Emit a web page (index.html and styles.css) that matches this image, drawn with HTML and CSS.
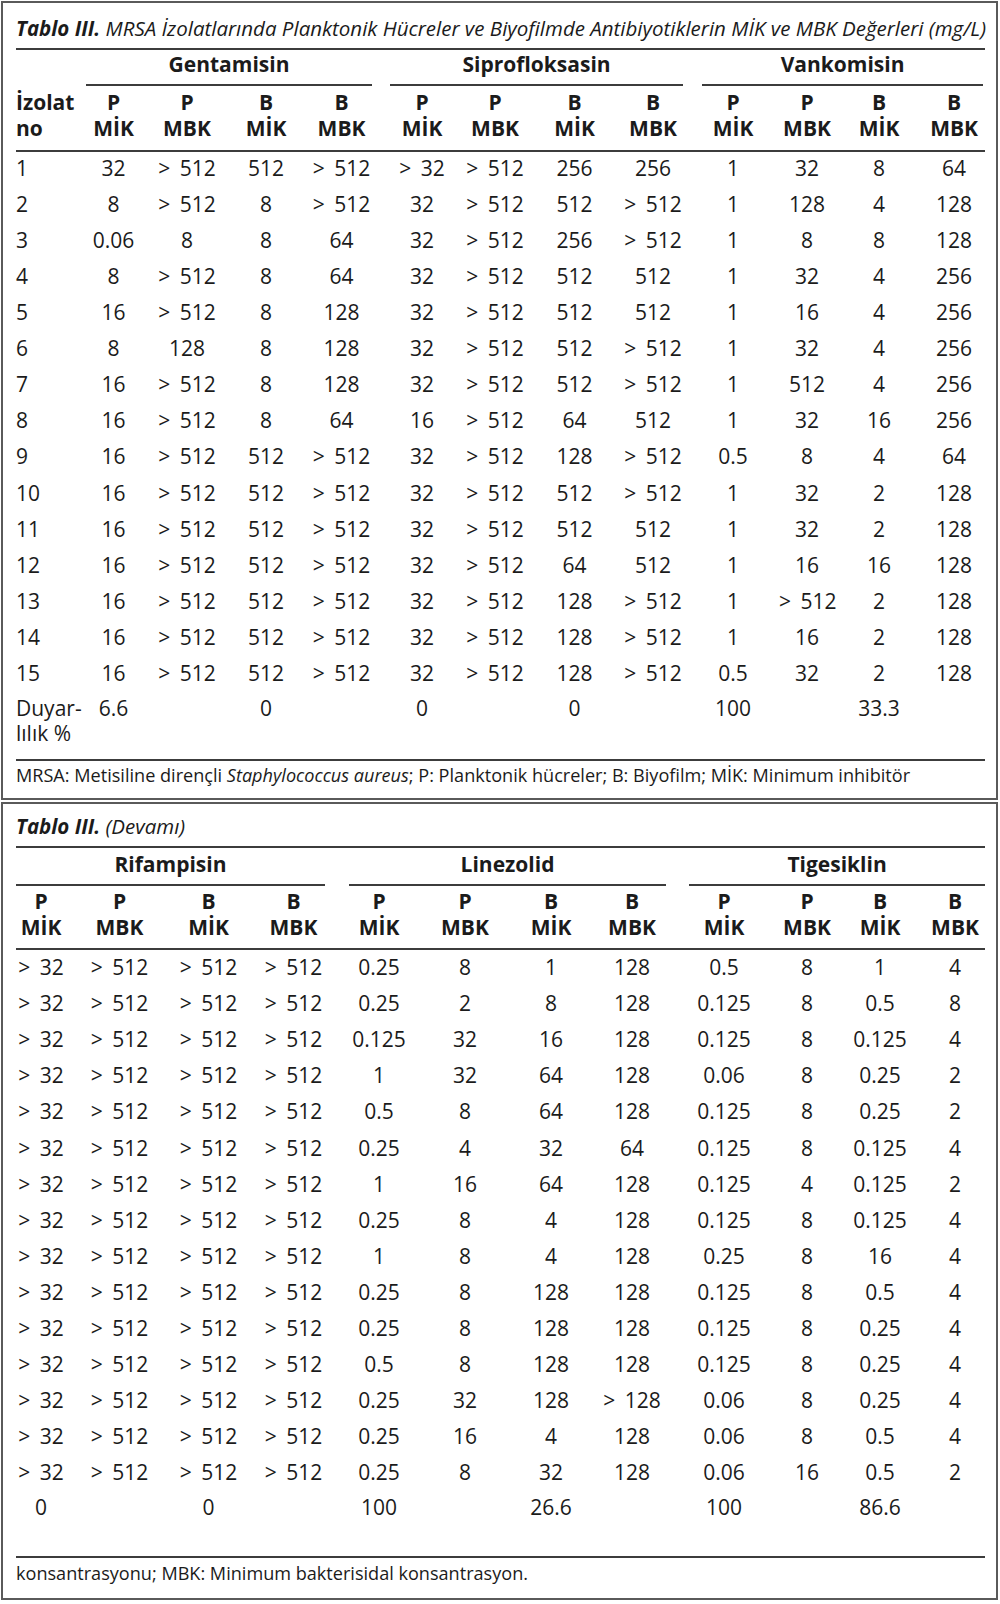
FILE: index.html
```html
<!DOCTYPE html>
<html lang="tr">
<head>
<meta charset="utf-8">
<title>Tablo III</title>
<link rel="stylesheet" href="styles.css">
</head>
<body>
<section class="box b1">
  <div class="caption"><b>Tablo III.</b> MRSA İzolatlarında Planktonik Hücreler ve Biyofilmde Antibiyotiklerin MİK ve MBK Değerleri (mg/L)</div>
  <table class="tbl t1">
    <colgroup>
      <col class="w70"><col class="w55"><col class="w92"><col class="w66"><col class="w85"><col class="w76"><col class="w70"><col class="w89"><col class="w68"><col class="w92"><col class="w56"><col class="w88"><col class="w62">
    </colgroup>
    <thead>
      <tr class="grp">
        <th></th>
        <th colspan="4"><div class="gl a1">Gentamisin</div></th>
        <th colspan="4"><div class="gl a2">Siprofloksasin</div></th>
        <th colspan="4"><div class="gl a3">Vankomisin</div></th>
      </tr>
      <tr class="sub">
        <th class="lbl">İzolat<br>no</th>
        <th>P<br>MİK</th><th>P<br>MBK</th><th>B<br>MİK</th><th>B<br>MBK</th>
        <th>P<br>MİK</th><th>P<br>MBK</th><th>B<br>MİK</th><th>B<br>MBK</th>
        <th>P<br>MİK</th><th>P<br>MBK</th><th>B<br>MİK</th><th>B<br>MBK</th>
      </tr>
    </thead>
    <tbody>
      <tr><td class="lbl">1</td><td>32</td><td>&gt; 512</td><td>512</td><td>&gt; 512</td><td>&gt; 32</td><td>&gt; 512</td><td>256</td><td>256</td><td>1</td><td>32</td><td>8</td><td>64</td></tr>
      <tr><td class="lbl">2</td><td>8</td><td>&gt; 512</td><td>8</td><td>&gt; 512</td><td>32</td><td>&gt; 512</td><td>512</td><td>&gt; 512</td><td>1</td><td>128</td><td>4</td><td>128</td></tr>
      <tr><td class="lbl">3</td><td>0.06</td><td>8</td><td>8</td><td>64</td><td>32</td><td>&gt; 512</td><td>256</td><td>&gt; 512</td><td>1</td><td>8</td><td>8</td><td>128</td></tr>
      <tr><td class="lbl">4</td><td>8</td><td>&gt; 512</td><td>8</td><td>64</td><td>32</td><td>&gt; 512</td><td>512</td><td>512</td><td>1</td><td>32</td><td>4</td><td>256</td></tr>
      <tr><td class="lbl">5</td><td>16</td><td>&gt; 512</td><td>8</td><td>128</td><td>32</td><td>&gt; 512</td><td>512</td><td>512</td><td>1</td><td>16</td><td>4</td><td>256</td></tr>
      <tr><td class="lbl">6</td><td>8</td><td>128</td><td>8</td><td>128</td><td>32</td><td>&gt; 512</td><td>512</td><td>&gt; 512</td><td>1</td><td>32</td><td>4</td><td>256</td></tr>
      <tr><td class="lbl">7</td><td>16</td><td>&gt; 512</td><td>8</td><td>128</td><td>32</td><td>&gt; 512</td><td>512</td><td>&gt; 512</td><td>1</td><td>512</td><td>4</td><td>256</td></tr>
      <tr><td class="lbl">8</td><td>16</td><td>&gt; 512</td><td>8</td><td>64</td><td>16</td><td>&gt; 512</td><td>64</td><td>512</td><td>1</td><td>32</td><td>16</td><td>256</td></tr>
      <tr><td class="lbl">9</td><td>16</td><td>&gt; 512</td><td>512</td><td>&gt; 512</td><td>32</td><td>&gt; 512</td><td>128</td><td>&gt; 512</td><td>0.5</td><td>8</td><td>4</td><td>64</td></tr>
      <tr><td class="lbl">10</td><td>16</td><td>&gt; 512</td><td>512</td><td>&gt; 512</td><td>32</td><td>&gt; 512</td><td>512</td><td>&gt; 512</td><td>1</td><td>32</td><td>2</td><td>128</td></tr>
      <tr><td class="lbl">11</td><td>16</td><td>&gt; 512</td><td>512</td><td>&gt; 512</td><td>32</td><td>&gt; 512</td><td>512</td><td>512</td><td>1</td><td>32</td><td>2</td><td>128</td></tr>
      <tr><td class="lbl">12</td><td>16</td><td>&gt; 512</td><td>512</td><td>&gt; 512</td><td>32</td><td>&gt; 512</td><td>64</td><td>512</td><td>1</td><td>16</td><td>16</td><td>128</td></tr>
      <tr><td class="lbl">13</td><td>16</td><td>&gt; 512</td><td>512</td><td>&gt; 512</td><td>32</td><td>&gt; 512</td><td>128</td><td>&gt; 512</td><td>1</td><td>&gt; 512</td><td>2</td><td>128</td></tr>
      <tr><td class="lbl">14</td><td>16</td><td>&gt; 512</td><td>512</td><td>&gt; 512</td><td>32</td><td>&gt; 512</td><td>128</td><td>&gt; 512</td><td>1</td><td>16</td><td>2</td><td>128</td></tr>
      <tr><td class="lbl">15</td><td>16</td><td>&gt; 512</td><td>512</td><td>&gt; 512</td><td>32</td><td>&gt; 512</td><td>128</td><td>&gt; 512</td><td>0.5</td><td>32</td><td>2</td><td>128</td></tr>
      <tr class="duy"><td class="lbl">Duyar-<br>lılık %</td><td>6.6</td><td></td><td>0</td><td></td><td>0</td><td></td><td>0</td><td></td><td>100</td><td></td><td>33.3</td><td></td></tr>
    </tbody>
  </table>
  <div class="note n1">MRSA: Metisiline dirençli <i>Staphylococcus aureus</i>; P: Planktonik hücreler; B: Biyofilm; MİK: Minimum inhibitör</div>
</section>

<section class="box b2">
  <div class="caption"><b>Tablo III.</b> (Devamı)</div>
  <table class="tbl t2">
    <colgroup>
      <col class="w50"><col class="w107"><col class="w71"><col class="w99"><col class="w72"><col class="w100"><col class="w72"><col class="w90"><col class="w94"><col class="w72"><col class="w74"><col class="w68">
    </colgroup>
    <thead>
      <tr class="grp">
        <th colspan="4"><div class="gl c1">Rifampisin</div></th>
        <th colspan="4"><div class="gl c2">Linezolid</div></th>
        <th colspan="4"><div class="gl c3">Tigesiklin</div></th>
      </tr>
      <tr class="sub">
        <th>P<br>MİK</th><th>P<br>MBK</th><th>B<br>MİK</th><th>B<br>MBK</th>
        <th>P<br>MİK</th><th>P<br>MBK</th><th>B<br>MİK</th><th>B<br>MBK</th>
        <th>P<br>MİK</th><th>P<br>MBK</th><th>B<br>MİK</th><th>B<br>MBK</th>
      </tr>
    </thead>
    <tbody>
      <tr><td>&gt; 32</td><td>&gt; 512</td><td>&gt; 512</td><td>&gt; 512</td><td>0.25</td><td>8</td><td>1</td><td>128</td><td>0.5</td><td>8</td><td>1</td><td>4</td></tr>
      <tr><td>&gt; 32</td><td>&gt; 512</td><td>&gt; 512</td><td>&gt; 512</td><td>0.25</td><td>2</td><td>8</td><td>128</td><td>0.125</td><td>8</td><td>0.5</td><td>8</td></tr>
      <tr><td>&gt; 32</td><td>&gt; 512</td><td>&gt; 512</td><td>&gt; 512</td><td>0.125</td><td>32</td><td>16</td><td>128</td><td>0.125</td><td>8</td><td>0.125</td><td>4</td></tr>
      <tr><td>&gt; 32</td><td>&gt; 512</td><td>&gt; 512</td><td>&gt; 512</td><td>1</td><td>32</td><td>64</td><td>128</td><td>0.06</td><td>8</td><td>0.25</td><td>2</td></tr>
      <tr><td>&gt; 32</td><td>&gt; 512</td><td>&gt; 512</td><td>&gt; 512</td><td>0.5</td><td>8</td><td>64</td><td>128</td><td>0.125</td><td>8</td><td>0.25</td><td>2</td></tr>
      <tr><td>&gt; 32</td><td>&gt; 512</td><td>&gt; 512</td><td>&gt; 512</td><td>0.25</td><td>4</td><td>32</td><td>64</td><td>0.125</td><td>8</td><td>0.125</td><td>4</td></tr>
      <tr><td>&gt; 32</td><td>&gt; 512</td><td>&gt; 512</td><td>&gt; 512</td><td>1</td><td>16</td><td>64</td><td>128</td><td>0.125</td><td>4</td><td>0.125</td><td>2</td></tr>
      <tr><td>&gt; 32</td><td>&gt; 512</td><td>&gt; 512</td><td>&gt; 512</td><td>0.25</td><td>8</td><td>4</td><td>128</td><td>0.125</td><td>8</td><td>0.125</td><td>4</td></tr>
      <tr><td>&gt; 32</td><td>&gt; 512</td><td>&gt; 512</td><td>&gt; 512</td><td>1</td><td>8</td><td>4</td><td>128</td><td>0.25</td><td>8</td><td>16</td><td>4</td></tr>
      <tr><td>&gt; 32</td><td>&gt; 512</td><td>&gt; 512</td><td>&gt; 512</td><td>0.25</td><td>8</td><td>128</td><td>128</td><td>0.125</td><td>8</td><td>0.5</td><td>4</td></tr>
      <tr><td>&gt; 32</td><td>&gt; 512</td><td>&gt; 512</td><td>&gt; 512</td><td>0.25</td><td>8</td><td>128</td><td>128</td><td>0.125</td><td>8</td><td>0.25</td><td>4</td></tr>
      <tr><td>&gt; 32</td><td>&gt; 512</td><td>&gt; 512</td><td>&gt; 512</td><td>0.5</td><td>8</td><td>128</td><td>128</td><td>0.125</td><td>8</td><td>0.25</td><td>4</td></tr>
      <tr><td>&gt; 32</td><td>&gt; 512</td><td>&gt; 512</td><td>&gt; 512</td><td>0.25</td><td>32</td><td>128</td><td>&gt; 128</td><td>0.06</td><td>8</td><td>0.25</td><td>4</td></tr>
      <tr><td>&gt; 32</td><td>&gt; 512</td><td>&gt; 512</td><td>&gt; 512</td><td>0.25</td><td>16</td><td>4</td><td>128</td><td>0.06</td><td>8</td><td>0.5</td><td>4</td></tr>
      <tr><td>&gt; 32</td><td>&gt; 512</td><td>&gt; 512</td><td>&gt; 512</td><td>0.25</td><td>8</td><td>32</td><td>128</td><td>0.06</td><td>16</td><td>0.5</td><td>2</td></tr>
      <tr class="duy"><td>0</td><td></td><td>0</td><td></td><td>100</td><td></td><td>26.6</td><td></td><td>100</td><td></td><td>86.6</td><td></td></tr>
    </tbody>
  </table>
  <div class="note n2">konsantrasyonu; MBK: Minimum bakterisidal konsantrasyon.</div>
</section>
</body>
</html>
```

FILE: styles.css
```css
html, body {
  margin: 0;
  padding: 0;
  background: #ffffff;
}

body {
  font-family: "Open Sans", "Noto Sans", sans-serif;
  color: #1b1b1b;
  width: 1000px;
}

.box {
  margin: 1px 2px 0 1px;
  border: 2px solid #5a5a5a;
  padding: 0 11px 0 13px;
}

.box + .box {
  margin-top: 2px;
}

.caption {
  font-style: italic;
  font-size: 20.5px;
  line-height: 24px;
  white-space: nowrap;
  padding-bottom: 8px;
  border-bottom: 2px solid #3c3c3c;
}

.b1 .caption { padding-top: 12.6px; }
.b2 .caption { padding-top: 10.2px; }

.caption b {
  font-weight: 700;
}

.tbl {
  table-layout: fixed;
  width: 969px;
  border-collapse: separate;
  border-spacing: 0;
  font-size: 21px;
}

.tbl th,
.tbl td {
  padding: 0;
  text-align: center;
  white-space: nowrap;
  vertical-align: top;
}

.tbl td {
  word-spacing: 4px;
}

.tbl th {
  font-weight: 700;
}

.tbl .lbl {
  text-align: left;
  word-spacing: 0;
}

/* column widths */
.w50 { width: 50px; }
.w55 { width: 55px; }
.w56 { width: 56px; }
.w62 { width: 62px; }
.w66 { width: 66px; }
.w68 { width: 68px; }
.w70 { width: 70px; }
.w71 { width: 71px; }
.w72 { width: 72px; }
.w74 { width: 74px; }
.w76 { width: 76px; }
.w85 { width: 85px; }
.w88 { width: 88px; }
.w89 { width: 89px; }
.w90 { width: 90px; }
.w92 { width: 92px; }
.w94 { width: 94px; }
.w99 { width: 99px; }
.w100 { width: 100px; }
.w107 { width: 107px; }

/* group header with partial rules */
.gl {
  line-height: 25px;
  padding-bottom: 7.5px;
  border-bottom: 2px solid #3c3c3c;
}

.t1 .gl { padding-top: 2.4px; }
.t2 .gl { padding-top: 3.3px; padding-bottom: 7px; }

.a1 { margin: 0 12px 0 0; }
.a2 { margin: 0 4px 0 6px; }
.a3 { margin: 0 2px 0 15px; }
.c1 { margin: 0 18px 0 0; }
.c2 { margin: 0 11px 0 6px; }
.c3 { margin: 0 0 0 12px; }

/* sub header row */
.sub th {
  line-height: 26px;
  padding-top: 2.5px;
  border-bottom: 2px solid #3c3c3c;
}

.t1 .sub th { padding-bottom: 9.5px; }
.t2 .sub th { padding-bottom: 8px; }

/* body rows */
.tbl tbody td {
  line-height: 26px;
  padding: 5.05px 0;
}

.t1 tbody tr:first-child td { padding-top: 2.2px; }
.t2 tbody tr:first-child td { padding-top: 4px; }

.t2 td:last-child,
.t2 .sub th:last-child {
  padding-left: 8px;
}

.tbl tbody .duy td {
  line-height: 25px;
  padding-top: 5px;
  padding-bottom: 12.5px;
}

.t2 tbody .duy td {
  padding-bottom: 35.5px;
}

/* footnotes */
.note {
  border-top: 2px solid #3c3c3c;
  font-size: 18.1px;
  line-height: 22px;
  padding-top: 3.6px;
  white-space: nowrap;
}

.n1 { padding-bottom: 12px; }
.n2 { padding-bottom: 14.5px; }
```
